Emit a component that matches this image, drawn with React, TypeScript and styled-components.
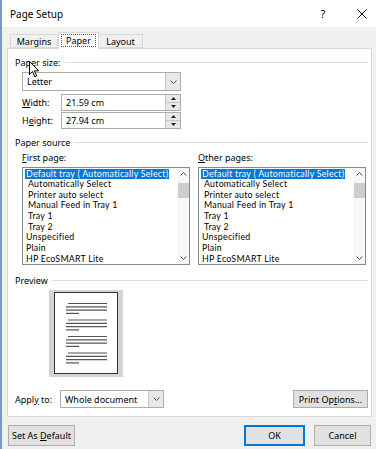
import React from 'react';
import styled, { createGlobalStyle } from 'styled-components';

const GlobalStyle = createGlobalStyle`
html, body {
    margin: 0;
    padding: 0;
}
body {
    background: #f0f0f0;
    font-family: "Noto Sans", "Liberation Sans", sans-serif;
    font-size: 9px;
    color: #000;
}
`;

const Window = styled.div`
position: relative;
width: 376px;
height: 449px;
box-sizing: border-box;
border-left: 2px solid #6d9cd6;
background: #f0f0f0;
display: flex;
flex-direction: column;
overflow: hidden;
`;

const TitleBar = styled.div`
height: 27px;
background: #fff;
display: flex;
align-items: center;
padding-left: 8px;
font-size: 10px;
`;

const Title = styled.div`
flex: 1;
padding-top: 1px;
`;

const TitleButton = styled.div<{ w: number }>`
width: ${({ w }) => w}px;
height: 27px;
display: flex;
align-items: center;
justify-content: center;
font-size: 11px;
`;

const Body = styled.div`
padding: 5px 4px 0 5px;
display: flex;
flex-direction: column;
`;

const TabStrip = styled.div`
display: flex;
align-items: flex-end;
height: 16px;
padding-left: 3px;
position: relative;
z-index: 1;
`;

const Tab = styled.div<{ w: number; active?: boolean }>`
width: ${({ w }) => w}px;
box-sizing: border-box;
height: ${({ active }) => (active ? 17 : 14)}px;
margin-bottom: ${({ active }) => (active ? -1 : 0)}px;
border: 1px solid #d9d9d9;
border-bottom: ${({ active }) => (active ? 'none' : '1px solid #d9d9d9')};
border-left: ${({ active }) => (active ? '1px solid #d9d9d9' : 'none')};
background: ${({ active }) => (active ? '#fff' : '#f0f0f0')};
display: flex;
align-items: center;
justify-content: center;
padding-bottom: ${({ active }) => (active ? 2 : 0)}px;
&:first-child {
    border-left: 1px solid #d9d9d9;
}
`;

const FocusRect = styled.span`
border: 1px dotted #555;
padding: 0 4px;
line-height: 11px;
`;

const Panel = styled.div`
height: 369px;
box-sizing: border-box;
background: #fff;
border: 1px solid #d9d9d9;
padding: 0 3px 0 7px;
display: flex;
flex-direction: column;
`;

const GroupHeader = styled.div<{ top: number }>`
margin-top: ${({ top }) => top}px;
display: flex;
align-items: center;
height: 14px;
gap: 4px;
&::after {
    content: '';
    flex: 1;
    height: 1px;
    background: #dcdcdc;
}
`;

const Indent = styled.div<{ top: number }>`
margin-top: ${({ top }) => top}px;
padding-left: 7px;
display: flex;
align-items: center;
`;

const Combo = styled.div<{ w: number; h: number }>`
width: ${({ w }) => w}px;
height: ${({ h }) => h}px;
box-sizing: border-box;
border: 1px solid #acacac;
background: #fff;
display: flex;
align-items: stretch;
`;

const ComboText = styled.div`
flex: 1;
display: flex;
align-items: center;
padding-left: 4px;
`;

const ComboButton = styled.div`
width: 14px;
background: #e8e8e8;
border-left: 1px solid #c5c5c5;
display: flex;
align-items: center;
justify-content: center;
`;

const FieldLabel = styled.div`
width: 39px;
`;

const Field = styled.div`
width: 120px;
height: 17px;
box-sizing: border-box;
border: 1px solid #acacac;
background: #fff;
display: flex;
`;

const SpinBox = styled.div`
width: 14px;
display: flex;
flex-direction: column;
border-left: 1px solid #c5c5c5;
`;

const SpinButton = styled.div`
flex: 1;
background: #e8e8e8;
display: flex;
align-items: center;
justify-content: center;
& + & {
    border-top: 1px solid #c5c5c5;
}
`;

const Columns = styled.div`
margin-top: 2px;
padding-left: 7px;
display: flex;
gap: 8px;
`;

const Column = styled.div`
display: flex;
flex-direction: column;
width: 168px;
`;

const ListLabel = styled.div`
height: 14px;
line-height: 14px;
margin-bottom: 2px;
`;

const ListBox = styled.div`
height: 98px;
box-sizing: border-box;
border: 1px solid #828790;
background: #fff;
display: flex;
`;

const Items = styled.div`
flex: 1;
padding-top: 0.5px;
padding-left: 1px;
font-family: Lato, "Noto Sans", sans-serif;
font-size: 8.8px;
letter-spacing: 0.25px;
`;

const Item = styled.div<{ indent?: boolean }>`
height: 10.67px;
line-height: 10.67px;
padding-left: ${({ indent }) => (indent ? 4 : 2)}px;
white-space: nowrap;
`;

const Selected = styled.span`
display: inline-block;
background: #0078d7;
color: #fff;
margin-left: -1px;
padding: 0 1px;
`;

const ScrollBar = styled.div`
width: 12px;
display: flex;
flex-direction: column;
background: #f7f7f7;
`;

const ScrollArrow = styled.div`
height: 12px;
display: flex;
align-items: center;
justify-content: center;
`;

const ScrollTrack = styled.div`
flex: 1;
padding-top: 3px;
`;

const Thumb = styled.div`
height: 15px;
margin-left: 1px;
background: #cdcdcd;
`;

const PreviewFrame = styled.div`
margin-top: 3px;
margin-left: 34px;
width: 74px;
height: 87px;
box-sizing: border-box;
background: #d4d4d4;
padding: 2px 5px 3px 5px;
`;

const Page = styled.div`
width: 100%;
height: 100%;
box-sizing: border-box;
background: #fff;
border: 1px solid #333;
`;

const ApplyRow = styled.div`
margin-top: 13px;
display: flex;
align-items: center;
`;

const ApplyLabel = styled.div`
width: 45px;
`;

const Spacer = styled.div`
flex: 1;
`;

const Button = styled.div<{ w: number; h: number; primary?: boolean }>`
width: ${({ w }) => w}px;
height: ${({ h }) => h}px;
box-sizing: border-box;
background: #e1e1e1;
border: ${({ primary }) => (primary ? '2px solid #0078d7' : '1px solid #adadad')};
display: flex;
align-items: center;
justify-content: center;
`;

const Footer = styled.div`
margin-top: 8px;
display: flex;
align-items: center;
padding-left: 1px;
padding-right: 1px;
gap: 9px;
`;

const U = styled.span`
text-decoration: underline;
text-underline-offset: 1px;
`;

const Cursor = styled.svg`
position: absolute;
left: 27px;
top: 61px;
`;

const Chevron = ({ up }: { up?: boolean }) => (
    <svg width="7" height="4" viewBox="0 0 7 4">
        <polyline
            points={up ? '0.5,3.5 3.5,0.5 6.5,3.5' : '0.5,0.5 3.5,3.5 6.5,0.5'}
            fill="none"
            stroke="#555"
            strokeWidth="1"
        />
    </svg>
);

const Tri = ({ up }: { up?: boolean }) => (
    <svg width="5" height="3" viewBox="0 0 5 3">
        <polygon points={up ? '0,3 2.5,0 5,3' : '0,0 2.5,3 5,0'} fill="#222" />
    </svg>
);

const trays: { label: string; indent?: boolean }[] = [
    { label: 'Automatically Select', indent: true },
    { label: 'Printer auto select', indent: true },
    { label: 'Manual Feed in Tray 1', indent: true },
    { label: 'Tray 1', indent: true },
    { label: 'Tray 2', indent: true },
    { label: 'Unspecified' },
    { label: 'Plain' },
    { label: 'HP EcoSMART Lite' },
];

function TrayList({ label, hot }: { label: string; hot: string }) {
    return (
        <Column>
            <ListLabel>
                <U>{hot}</U>
                {label}
            </ListLabel>
            <ListBox>
                <Items>
                    <Item>
                        <Selected>Default tray ( Automatically Select)</Selected>
                    </Item>
                    {trays.map((t) => (
                        <Item key={t.label} indent={t.indent}>
                            {t.label}
                        </Item>
                    ))}
                </Items>
                <ScrollBar>
                    <ScrollArrow>
                        <Chevron up />
                    </ScrollArrow>
                    <ScrollTrack>
                        <Thumb />
                    </ScrollTrack>
                    <ScrollArrow>
                        <Chevron />
                    </ScrollArrow>
                </ScrollBar>
            </ListBox>
        </Column>
    );
}

function PagePreview() {
    const groups = [0, 1, 2, 3];
    return (
        <svg width="62" height="80" viewBox="0 0 62 80">
            {groups.map((g) => {
                const y = 10.5 + g * 16.5;
                return (
                    <g key={g} stroke="#555" strokeWidth="1.2">
                        <line x1="13" x2="52" y1={y} y2={y} />
                        <line x1="11" x2="52" y1={y + 3.3} y2={y + 3.3} />
                        <line x1="11" x2="52" y1={y + 6.6} y2={y + 6.6} />
                        <line x1="11" x2="24" y1={y + 9.9} y2={y + 9.9} />
                    </g>
                );
            })}
        </svg>
    );
}

function SpinField({ value }: { value: string }) {
    return (
        <Field>
            <ComboText>{value}</ComboText>
            <SpinBox>
                <SpinButton>
                    <Tri up />
                </SpinButton>
                <SpinButton>
                    <Tri />
                </SpinButton>
            </SpinBox>
        </Field>
    );
}

export default function App() {
    return (
        <>
            <GlobalStyle />
            <Window>
                <TitleBar>
                    <Title>Page Setup</Title>
                    <TitleButton w={50}>?</TitleButton>
                    <TitleButton w={28}>
                        <svg width="10" height="10" viewBox="0 0 10 10">
                            <path d="M0.5 0.5 L9.5 9.5 M9.5 0.5 L0.5 9.5" stroke="#111" strokeWidth="1" />
                        </svg>
                    </TitleButton>
                </TitleBar>
                <Body>
                    <TabStrip>
                        <Tab w={48}>Margins</Tab>
                        <Tab w={41} active>
                            <FocusRect>Paper</FocusRect>
                        </Tab>
                        <Tab w={44}>Layout</Tab>
                    </TabStrip>
                    <Panel>
                        <GroupHeader top={6}>Paper size:</GroupHeader>
                        <Indent top={3}>
                            <Combo w={159} h={19}>
                                <ComboText>Letter</ComboText>
                                <ComboButton>
                                    <Chevron />
                                </ComboButton>
                            </Combo>
                        </Indent>
                        <Indent top={3}>
                            <FieldLabel>
                                <U>W</U>idth:
                            </FieldLabel>
                            <SpinField value="21.59 cm" />
                        </Indent>
                        <Indent top={1}>
                            <FieldLabel>
                                H<U>e</U>ight:
                            </FieldLabel>
                            <SpinField value="27.94 cm" />
                        </Indent>
                        <GroupHeader top={6}>Paper source</GroupHeader>
                        <Columns>
                            <TrayList hot="F" label="irst page:" />
                            <TrayList hot="O" label="ther pages:" />
                        </Columns>
                        <GroupHeader top={8}>Preview</GroupHeader>
                        <PreviewFrame>
                            <Page>
                                <PagePreview />
                            </Page>
                        </PreviewFrame>
                        <ApplyRow>
                            <ApplyLabel>
                                Appl<U>y</U> to:
                            </ApplyLabel>
                            <Combo w={104} h={18}>
                                <ComboText>Whole document</ComboText>
                                <ComboButton>
                                    <Chevron />
                                </ComboButton>
                            </Combo>
                            <Spacer />
                            <Button w={75} h={18}>
                                Print Op<U>t</U>ions...
                            </Button>
                        </ApplyRow>
                    </Panel>
                    <Footer>
                        <Button w={67} h={21}>
                            Set As&nbsp;<U>D</U>efault
                        </Button>
                        <Spacer />
                        <Button w={61} h={21} primary>
                            OK
                        </Button>
                        <Button w={57} h={21}>
                            Cancel
                        </Button>
                    </Footer>
                </Body>
                <Cursor width="11" height="17" viewBox="0 0 11 17">
                    <path
                        d="M0.5 0.5 L0.5 13.5 L3.5 10.5 L5.8 15.8 L7.6 15 L5.4 9.8 L9.8 9.8 Z"
                        fill="#fff"
                        stroke="#000"
                        strokeWidth="1"
                        strokeLinejoin="round"
                    />
                </Cursor>
            </Window>
        </>
    );
}
